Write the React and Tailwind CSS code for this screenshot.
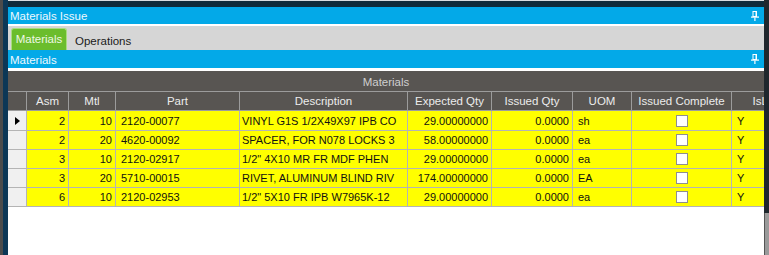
import React from "react";

const cols = [
  { key: "sel", w: 19, label: "" },
  { key: "asm", w: 42, label: "Asm", align: "right" },
  { key: "mtl", w: 47, label: "Mtl", align: "right" },
  { key: "part", w: 124, label: "Part", align: "left", pl: 5 },
  { key: "desc", w: 168, label: "Description", align: "left", pl: 2 },
  { key: "exp", w: 84, label: "Expected Qty", align: "right" },
  { key: "iss", w: 81, label: "Issued Qty", align: "right" },
  { key: "uom", w: 59, label: "UOM", align: "left", pl: 5 },
  { key: "ic", w: 100, label: "Issued Complete", align: "center" },
  { key: "lot", w: 108, label: "IsLotTracked", align: "left", pl: 5 },
];

const rows = [
  { asm: "2", mtl: "10", part: "2120-00077", desc: "VINYL G1S 1/2X49X97 IPB CO", exp: "29.00000000", iss: "0.0000", uom: "sh", lot: "Y" },
  { asm: "2", mtl: "20", part: "4620-00092", desc: "SPACER, FOR N078 LOCKS 3", exp: "58.00000000", iss: "0.0000", uom: "ea", lot: "Y" },
  { asm: "3", mtl: "10", part: "2120-02917", desc: '1/2" 4X10 MR FR MDF PHEN', exp: "29.00000000", iss: "0.0000", uom: "ea", lot: "Y" },
  { asm: "3", mtl: "20", part: "5710-00015", desc: "RIVET, ALUMINUM BLIND RIV", exp: "174.00000000", iss: "0.0000", uom: "EA", lot: "Y" },
  { asm: "6", mtl: "10", part: "2120-02953", desc: '1/2" 5X10 FR IPB W7965K-12', exp: "29.00000000", iss: "0.0000", uom: "ea", lot: "Y" },
];

function Pin() {
  return (
    <svg width="8" height="10" viewBox="0 0 8 10" className="block">
      <rect x="2" y="0.5" width="3.5" height="5" fill="none" stroke="#fff" strokeWidth="1" />
      <rect x="4.5" y="0" width="1.5" height="6" fill="#fff" />
      <rect x="0" y="5.5" width="8" height="1.2" fill="#fff" />
      <rect x="3.3" y="6.5" width="1.2" height="3.5" fill="#fff" />
    </svg>
  );
}

export default function App() {
  return (
    <div className="w-[769px] h-[255px] flex overflow-hidden bg-white font-['Liberation_Sans',Arial,sans-serif]">
      {/* left chrome */}
      <div className="w-[3px] shrink-0 bg-[#4b4b4b]" />
      <div className="w-[5px] shrink-0 bg-[#0c3756]" />

      {/* main */}
      <div className="w-[756px] shrink-0 flex flex-col">
        <div className="h-[1px] bg-[#d9dde0]" />
        <div className="h-[6px] bg-[#0f2b3a]" />
        {/* title bar */}
        <div className="h-[17px] bg-[#03a9e8] flex items-center justify-between pl-[2px] pr-[5px]">
          <span className="text-[11.5px] text-[#eef8fe] leading-none pt-[2px]">Materials Issue</span>
          <Pin />
        </div>
        <div className="h-[2px] bg-white" />
        {/* tabs */}
        <div className="h-[24px] bg-[#d6d6d6] flex items-end pl-[3px]">
          <div className="w-[56px] h-[22px] rounded-t-[3px] border border-b-0 border-[#a9dc80] bg-[#6bbd2c] flex items-center justify-center">
            <span className="text-[11.5px] text-[#eef8e4] leading-none pt-[1px]">Materials</span>
          </div>
          <div className="h-[22px] flex items-center pl-[8px] pt-[5px]">
            <span className="text-[11.5px] text-[#1a1a1a] leading-none">Operations</span>
          </div>
        </div>
        {/* materials bar */}
        <div className="h-[18px] bg-[#03a9e8] flex items-center justify-between pl-[2px] pr-[5px]">
          <span className="text-[11.5px] text-[#eef8fe] leading-none pt-[3px]">Materials</span>
          <Pin />
        </div>
        <div className="h-[3px] bg-white" />

        {/* grid */}
        <div className="flex-1 overflow-hidden bg-white">
          <div className="h-[20px] bg-[#585552] flex items-center justify-center">
            <span className="text-[11.5px] text-[#cfcfcf] leading-none pt-[3px]">Materials</span>
          </div>
          <div className="h-[1px] bg-[#9c9c9c]" />
          <div className="flex h-[19px] w-max bg-[#585552] border-b border-[#9c9c9c]">
            {cols.map((c) => (
              <div
                key={c.key}
                style={{ width: c.w }}
                className="shrink-0 h-full border-r border-[#9c9c9c] flex items-center justify-center overflow-hidden whitespace-nowrap pt-[2px]"
              >
                <span className="text-[11.5px] text-[#ececec] leading-none">{c.label}</span>
              </div>
            ))}
          </div>
          {rows.map((r, i) => (
            <div
              key={i}
              className={`flex w-max border-b border-[#b4b4b4] ${i === 0 ? "h-[20px]" : "h-[19px]"}`}
            >
              {cols.map((c) => {
                if (c.key === "sel") {
                  return (
                    <div
                      key={c.key}
                      style={{ width: c.w }}
                      className="shrink-0 h-full bg-[#f0f0f0] border-r border-[#b4b4b4] flex items-center justify-center"
                    >
                      {i === 0 && (
                        <div className="w-0 h-0 border-l-[5px] border-l-black border-y-[4px] border-y-transparent" />
                      )}
                    </div>
                  );
                }
                if (c.key === "ic") {
                  return (
                    <div
                      key={c.key}
                      style={{ width: c.w }}
                      className="shrink-0 h-full bg-[#ffff00] border-r border-[#b4b4b4] flex items-center justify-center"
                    >
                      <div className="w-[12px] h-[12px] bg-white border border-[#8e8e8e]" />
                    </div>
                  );
                }
                const justify =
                  c.align === "right" ? "justify-end pr-[3px]" : c.align === "center" ? "justify-center" : "justify-start";
                return (
                  <div
                    key={c.key}
                    style={{ width: c.w, paddingLeft: c.pl }}
                    className={`shrink-0 h-full bg-[#ffff00] border-r border-[#b4b4b4] flex items-center overflow-hidden whitespace-nowrap pt-[1px] ${justify}`}
                  >
                    <span className="text-[11px] text-[#111] leading-none">{r[c.key]}</span>
                  </div>
                );
              })}
            </div>
          ))}
        </div>
      </div>

      {/* right chrome */}
      <div className="w-[5px] shrink-0 flex flex-col">
        <div className="h-[213px] bg-[#1f272d]" />
        <div className="flex-1 flex">
          <div className="w-[1px] bg-[#555]" />
          <div className="flex-1 bg-[#9a9a9a]" />
        </div>
      </div>
    </div>
  );
}
